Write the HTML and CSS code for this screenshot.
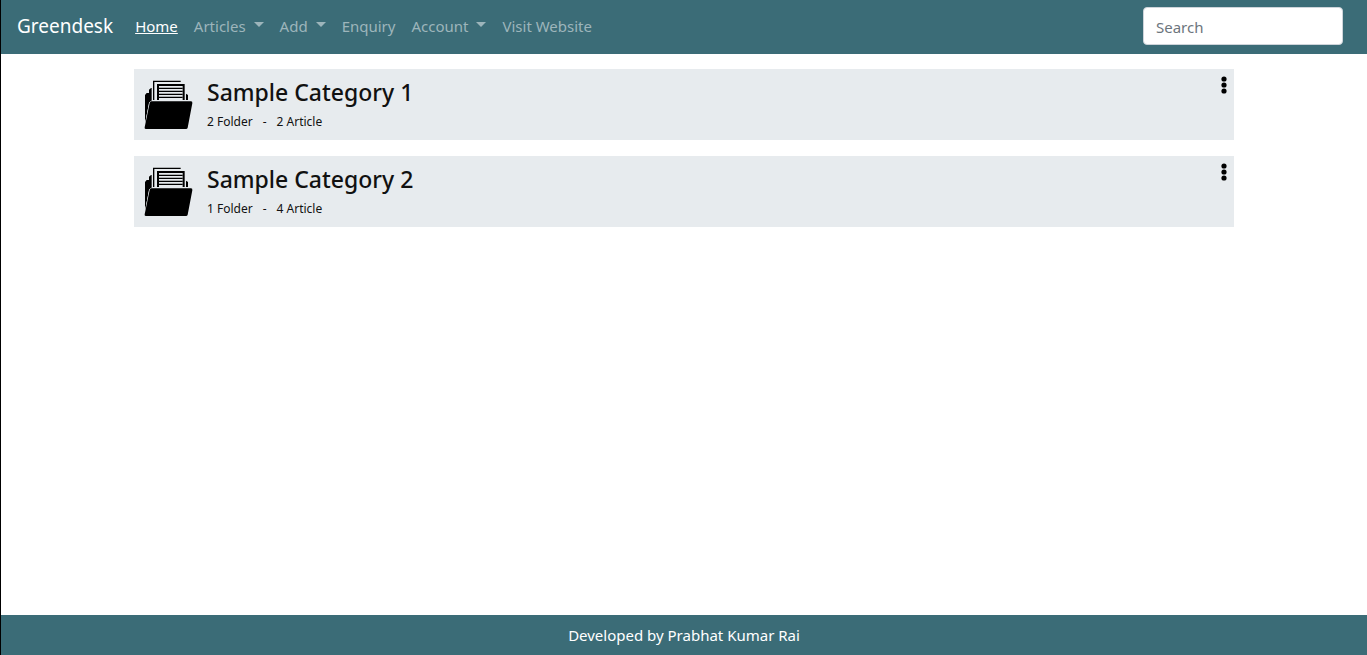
FILE: index.html
```
<!DOCTYPE html>
<html lang="en">
<head>
<meta charset="utf-8">
<meta name="viewport" content="width=device-width, initial-scale=1">
<title>Greendesk</title>
<link rel="stylesheet" href="styles.css">
</head>
<body class="page">
<svg class="sprite" aria-hidden="true">
  <symbol id="folder" viewBox="0 0 147 150">
    <path d="M3 132V45l5-6h7V29l6-5h2v38l-8 6z"/>
    <path d="M29 60V4h81" fill="none" stroke="#000" stroke-width="4"/>
    <path d="M42 60V15h77v45" fill="none" stroke="#000" stroke-width="6"/>
    <path d="M45 25h71M45 34h71M45 43h71M45 52h71" stroke="#000" stroke-width="4"/>
    <path d="M126 41l6 4v15h-6z"/>
    <path d="M22 64h119q5 0 4 6l-14 73q-1 4-5 4H5q-4 0-3-5L17 69q1-5 5-5z" stroke="#e7ebee" stroke-width="3" paint-order="stroke"/>
  </symbol>
  <symbol id="dots" viewBox="0 0 6 18">
    <circle cx="3" cy="3" r="2.6"/><circle cx="3" cy="9" r="2.6"/><circle cx="3" cy="15" r="2.6"/>
  </symbol>
</svg>
<header class="navbar">
  <a class="brand" href="#">Greendesk</a>
  <nav class="nav">
    <a class="nav-link active" href="#">Home</a>
    <button class="nav-link dropdown" type="button">Articles</button>
    <button class="nav-link dropdown" type="button">Add</button>
    <a class="nav-link" href="#">Enquiry</a>
    <button class="nav-link dropdown" type="button">Account</button>
    <a class="nav-link" href="#">Visit Website</a>
  </nav>
  <input class="search" type="search" placeholder="Search" aria-label="Search">
</header>
<main class="content">
  <article class="category">
    <svg class="folder-icon" aria-hidden="true"><use href="#folder"/></svg>
    <div class="info">
      <h2 class="title">Sample Category 1</h2>
      <p class="meta"><span>2 Folder</span><span>-</span><span>2 Article</span></p>
    </div>
    <button class="more" type="button" aria-label="Category 1 options"><svg class="dots-icon"><use href="#dots"/></svg></button>
  </article>
  <article class="category">
    <svg class="folder-icon" aria-hidden="true"><use href="#folder"/></svg>
    <div class="info">
      <h2 class="title">Sample Category 2</h2>
      <p class="meta"><span>1 Folder</span><span>-</span><span>4 Article</span></p>
    </div>
    <button class="more" type="button" aria-label="Category 2 options"><svg class="dots-icon"><use href="#dots"/></svg></button>
  </article>
</main>
<footer class="footer">Developed by Prabhat Kumar Rai</footer>
</body>
</html>
```
FILE: styles.css
```
* { box-sizing: border-box; }
.page {
  margin: 0;
  min-height: 100vh;
  display: flex;
  flex-direction: column;
  border-left: 1px solid #000;
  background: #fff;
  color: #111;
  font: 15px/24px "Segoe UI", "Noto Sans", sans-serif;
}
.sprite { display: none; }
.navbar {
  display: flex;
  align-items: center;
  padding: 7px 24px 9px 16px;
  background: #3b6c77;
}
.brand {
  margin-right: 14px;
  color: #fff;
  font-size: 19px;
  line-height: 30px;
  text-decoration: none;
}
.nav { display: flex; flex: 1; }
.nav-link {
  display: flex;
  align-items: center;
  padding: 7px 8px;
  border: 0;
  background: none;
  color: #9db5bb;
  font: inherit;
  text-decoration: none;
  white-space: nowrap;
}
.active { color: #fff; text-decoration: underline; }
.dropdown::after {
  content: "";
  margin: 0 0 4px 8px;
  border: 5px solid transparent;
  border-top-color: currentColor;
  border-bottom: 0;
}
.search {
  width: 200px;
  height: 38px;
  padding: 8px 12px 6px;
  border: 1px solid #ced4da;
  border-radius: 4px;
  background: #fff;
  color: #495057;
  font: inherit;
}
.search::placeholder { color: #6c757d; opacity: 1; }
.content {
  flex: 1;
  display: flex;
  flex-direction: column;
  gap: 16px;
  width: 100%;
  max-width: 1100px;
  margin: 0 auto;
  padding: 15px 0;
}
.category {
  display: flex;
  align-items: flex-start;
  gap: 14px;
  padding: 7px 7px 9px 10px;
  background: #e7ebee;
}
.folder-icon { width: 49px; height: 50px; margin-top: 4px; }
.info { flex: 1; }
.title { margin: 0; font-size: 23px; line-height: 32px; font-weight: 500; }
.meta {
  display: flex;
  gap: 10px;
  margin: 5px 0 0;
  font-size: 12px;
  line-height: 18px;
}
.more { display: flex; padding: 0; border: 0; background: none; }
.dots-icon { width: 6px; height: 18px; }
.footer {
  padding: 8px;
  background: #3b6c77;
  color: #fff;
  text-align: center;
}
```
